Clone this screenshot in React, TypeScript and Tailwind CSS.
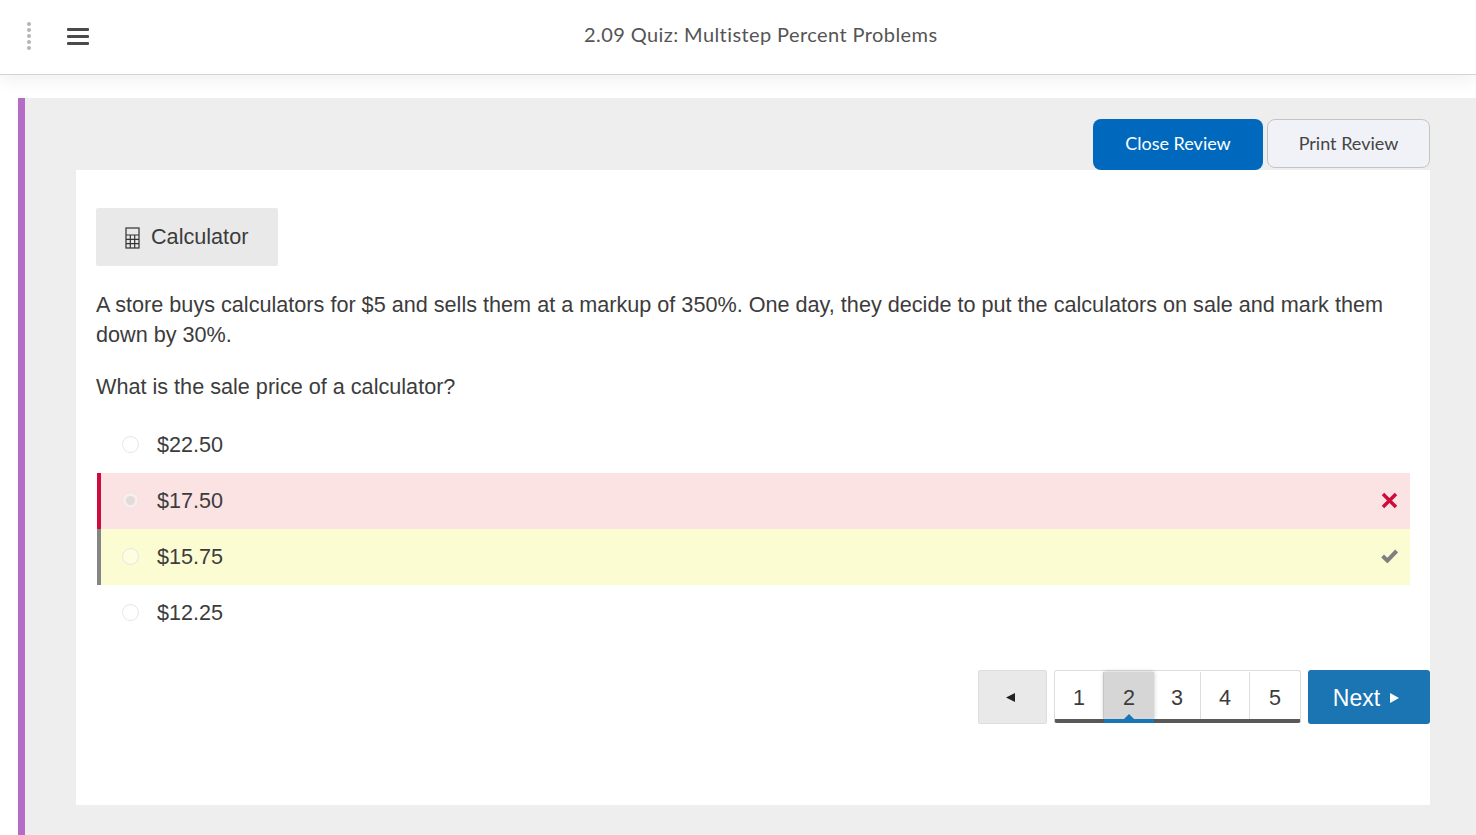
import React from "react";

const sans = "font-['Liberation_Sans',Arial,sans-serif]";

function Radio({ selected = false }: { selected?: boolean }) {
  return (
    <span className="-mt-[2px] w-[17px] h-[17px] rounded-full border border-[#e6e6e6] flex items-center justify-center shrink-0 bg-white/30">
      {selected && <span className="w-[9px] h-[9px] rounded-full bg-[#e3dada]" />}
    </span>
  );
}

function Option({ label, state }: { label: string; state?: "wrong" | "right" }) {
  const bg =
    state === "wrong"
      ? "bg-[#fbe2e3] border-[#cf0a3c]"
      : state === "right"
        ? "bg-[#fcfcd2] border-[#858585]"
        : "border-transparent";
  return (
    <div className={`ml-px h-14 flex items-center border-l-4 pl-[21px] pr-[12px] ${bg}`}>
      <Radio selected={state === "wrong"} />
      <span className="ml-[18px] text-[21.6px] leading-[30px] text-[#3c3c3c]">{label}</span>
      {state === "wrong" && (
        <svg className="ml-auto -mt-[2px]" width="17" height="17" viewBox="0 0 17 17">
          <path d="M2 2 15 15M15 2 2 15" stroke="#cf0a3c" strokeWidth="3.4" fill="none" />
        </svg>
      )}
      {state === "right" && (
        <svg className="ml-auto -mt-[2px]" width="17" height="14" viewBox="0 0 17 14">
          <path d="M1.6 7 6.4 11.6 15.6 2" stroke="#7f7f7f" strokeWidth="4" fill="none" />
        </svg>
      )}
    </div>
  );
}

function Page({ n, width, active = false, last = false }: { n: number; width: string; active?: boolean; last?: boolean }) {
  return (
    <div
      className={`relative h-full flex items-center justify-center pt-[6px] text-[21.6px] text-[#3c3c3c] ${width} ${
        active ? "bg-[#d6d6d6] shadow-[0_0_4px_rgba(0,0,0,0.25)]" : ""
      } ${!active && !last ? "border-r border-[#dcdcdc]" : ""}`}
    >
      {n}
      {active && (
        <>
          <span className="absolute left-0 right-0 -bottom-[4px] h-[4px] bg-[#1a75b2]" />
          <span className="absolute left-1/2 -translate-x-1/2 bottom-0 w-0 h-0 border-x-[5px] border-x-transparent border-b-[5px] border-b-[#1a75b2]" />
        </>
      )}
    </div>
  );
}

export default function App() {
  return (
    <div className={`h-[835px] overflow-hidden bg-white flex flex-col ${sans}`}>
      <header className="h-[75px] shrink-0 flex items-center bg-white border-b border-[#d5d5d5] shadow-[0_4px_18px_rgba(0,0,0,0.07)] relative">
        <div className="ml-[27px] w-[4px] flex flex-col gap-[2px] items-center mb-[2px]">
          {[0, 1, 2, 3, 4].map((i) => (
            <span key={i} className="w-[4px] h-[4px] rounded-full bg-[#b5b5b5]" />
          ))}
        </div>
        <div className="ml-[36px] mb-[2px] w-[22px] flex flex-col gap-[4px]">
          {[0, 1, 2].map((i) => (
            <span key={i} className="h-[3px] bg-[#4a4a4a] rounded-[1px]" />
          ))}
        </div>
        <div className="absolute left-[584px] top-[20px] font-['Lato',sans-serif] text-[20px] leading-[28px] tracking-[0.41px] text-[#555]">
          2.09 Quiz: Multistep Percent Problems
        </div>
      </header>

      <main className="mt-[23px] ml-[18px] flex-1 border-l-[7px] border-[#b56cc9] bg-[#eeeeee] pl-[51px] pr-[46px]">
        <div className="h-[72px] pt-[21px] flex justify-end items-start gap-[4px] font-['Lato',sans-serif] text-[18px]">
          <button className="w-[170px] h-[51px] pb-[2px] rounded-[8px] bg-[#0069bd] text-white">
            Close Review
          </button>
          <button className="w-[163px] h-[49px] rounded-[8px] bg-[#f0f2f7] border border-[#c4c4c4] text-[#444]">
            Print Review
          </button>
        </div>

        <section className="h-[635px] bg-white px-[20px] pt-[38px]">
          <button className="w-[182px] h-[58px] rounded-[2px] bg-[#e9e9e9] flex items-center pl-[29px] text-[21.63px] text-[#3c3c3c]">
            <svg width="15" height="22" viewBox="0 0 15 22" className="mt-[2px]" fill="none" stroke="#333" strokeWidth="1.2">
              <rect x="1" y="1" width="13" height="20" />
              <path d="M1 8H14M1 12.3H14M1 16.6H14M5.3 8V21M9.7 8V21" />
            </svg>
            <span className="ml-[11px]">Calculator</span>
          </button>

          <p className="mt-[24px] text-[21.63px] leading-[30px] text-[#3c3c3c]">
            A store buys calculators for $5 and sells them at a markup of 350%. One day, they decide to put the calculators on sale and mark them down by 30%.
          </p>
          <p className="mt-[22px] text-[21.63px] leading-[30px] text-[#3c3c3c]">What is the sale price of a calculator?</p>

          <div className="mt-[15px]">
            <Option label="$22.50" />
            <Option label="$17.50" state="wrong" />
            <Option label="$15.75" state="right" />
            <Option label="$12.25" />
          </div>

          <div className="mt-[29px] -mr-[20px] flex justify-end">
            <button className="w-[69px] h-[54px] mr-[7px] rounded-[2px] bg-[#e9e9e9] border border-[#dddddd] flex items-center justify-center">
              <svg width="11" height="11" viewBox="0 0 11 11" className="-ml-[4px]">
                <path d="M10 1V10L1 5.5Z" fill="#222" />
              </svg>
            </button>
            <nav className="w-[247px] h-[53px] mr-[7px] rounded-[3px] border border-[#dcdcdc] border-b-[4px] border-b-[#595959] flex pt-px">
              <Page n={1} width="w-[49px]" />
              <Page n={2} width="w-[50px]" active />
              <Page n={3} width="w-[47px]" />
              <Page n={4} width="w-[49px]" />
              <Page n={5} width="w-[50px]" last />
            </nav>
            <button className="w-[122px] h-[54px] rounded-[3px] bg-[#1a75b2] text-white text-[23px] flex items-center justify-center gap-[9px] pr-[5px] pt-[2px]">
              Next
              <svg width="11" height="12" viewBox="0 0 11 12" className="-mt-[1px]">
                <path d="M1 1V11L10 6Z" fill="#fff" />
              </svg>
            </button>
          </div>
        </section>
      </main>
    </div>
  );
}
